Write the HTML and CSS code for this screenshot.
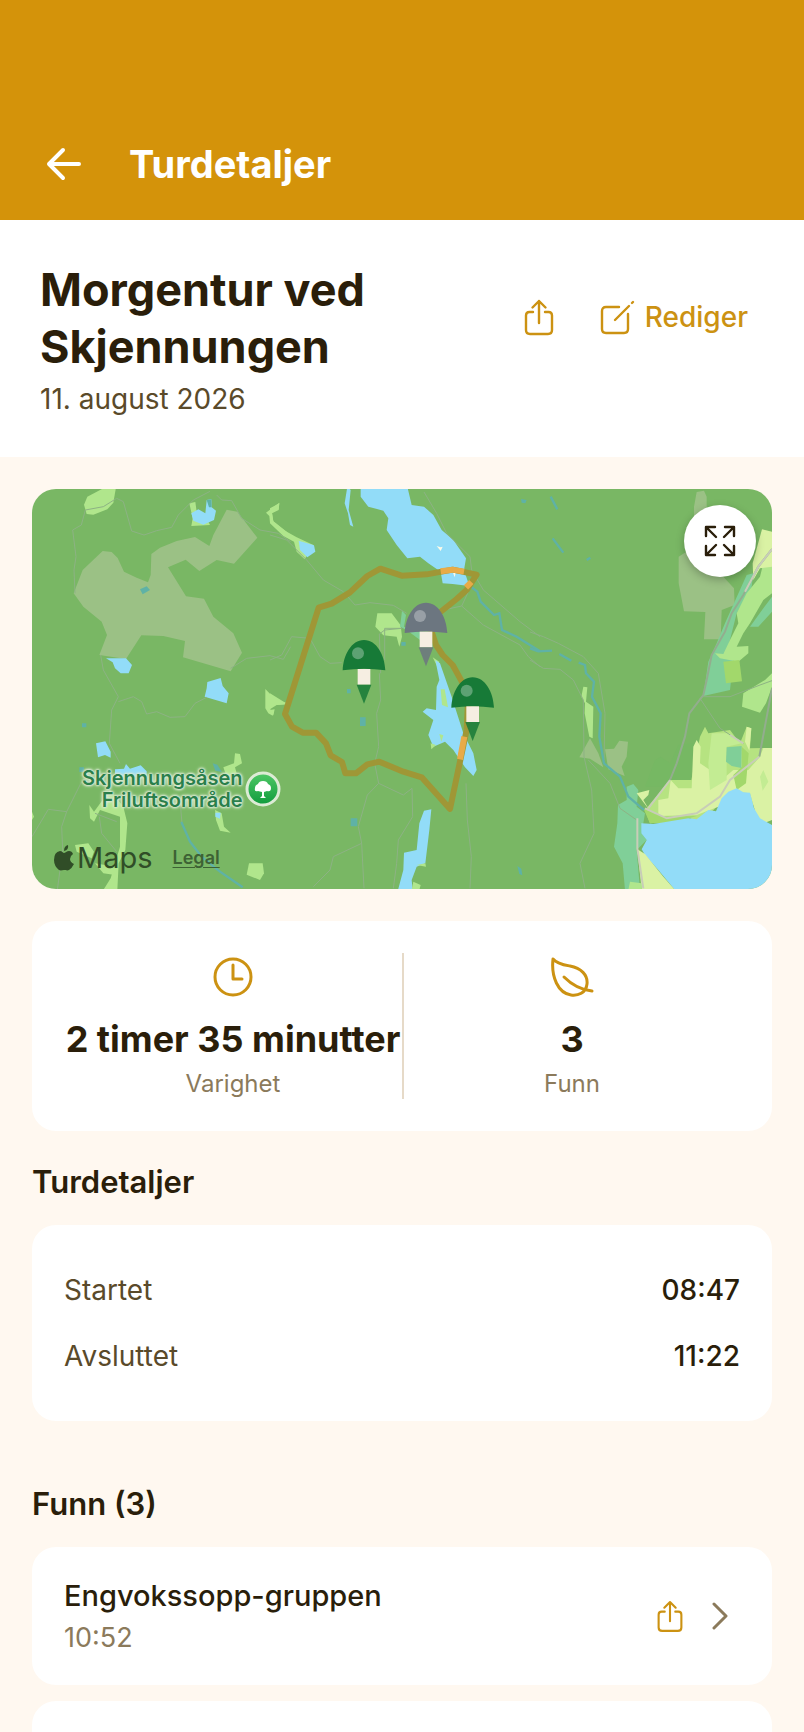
FILE: index.html
```html
<!DOCTYPE html>
<html lang="nb">
<head>
    <meta charset="UTF-8">
    <meta name="viewport" content="width=device-width, initial-scale=1.0">
    <title>Turdetaljer</title>
    <link rel="stylesheet" href="styles.css">
</head>
<body>

    <header class="app-bar">
        <button class="icon-btn back-btn" type="button" aria-label="Tilbake">
            <svg width="36" height="36" viewBox="0 0 36 36" fill="none" stroke="currentColor" stroke-width="4" stroke-linecap="round" stroke-linejoin="round">
                <path d="M33 18H3M17 4L3 18l14 14"/>
            </svg>
        </button>
        <p class="app-title">Turdetaljer</p>
    </header>

    <section class="trip-header">
        <div class="trip-name">
            <h1>Morgentur ved Skjennungen</h1>
            <p class="trip-date">11. august 2026</p>
        </div>
        <div class="trip-actions">
            <button class="icon-btn" type="button" aria-label="Del tur">
                <svg width="32" height="38" viewBox="0 0 32 38" fill="none" stroke="currentColor" stroke-width="2.4" stroke-linecap="round" stroke-linejoin="round">
                    <path d="M10 14H6.500Q3 14 3 17.500V32Q3 36 7 36H25Q29 36 29 32V17.500Q29 14 25.500 14H22"/>
                    <path d="M16 25V3M9.500 9.500L16 3l6.500 6.500"/>
                </svg>
            </button>
            <button class="edit-btn" type="button">
                <svg width="36" height="38" viewBox="0 0 36 38" fill="none" stroke="currentColor" stroke-width="2.4" stroke-linecap="round" stroke-linejoin="round">
                    <path d="M20 9H7Q3 9 3 13V31Q3 35 7 35H25Q29 35 29 31V16"/>
                    <path d="M16 22L30 8M33 5L34 4"/>
                </svg>
                Rediger
            </button>
        </div>
    </section>

    <main>
        <div class="map">
            <svg class="map-art" viewBox="0 0 2220 1200" preserveAspectRatio="xMidYMid slice" role="img" aria-label="Kart over turen">
                <rect width="2220" height="1200" fill="#79b764"/>

                <!-- west -->
                <g transform="translate(-36 -27)">
                    <path fill="#9bc185" d="M248 213L275 216 293 234 312 275 350 293 384 307 392 285 394 222 420 203 470 183 525 171 568 198 580 165 620 89 652 95 712 173 642 251 590 240 538 273 497 239 444 262 498 349 552 356 580 410 640 460 666 518 632 574 489 532 495 483 430 468 364 466 318 537 238 525 261 465 245 425 190 380 161 340 188 270z"/>
                    <g fill="#b0e68c">
                        <path d="M202 50L236 32 260 20 288 22 280 68 262 88 220 104 200 102 192 74z"/>
                        <path d="M508 70L526 66 530 95 560 115 570 135 514 138 518 115z"/>
                        <path d="M778 68L776 88 756 98 760 124 800 155 815 174 790 162 762 136 750 128 748 108 738 98z"/>
                        <path d="M736 627L768 660 812 672 770 675 750 688 762 695 758 707 745 700 736 685z"/>
                        <path d="M645 820L660 822 666 850 645 862 650 880 620 890 610 862 642 850z"/>
                        <path d="M585 990L605 1000 612 1040 632 1058 600 1052 588 1020z"/>
                        <path d="M687 1150L728 1150 732 1180 720 1200 680 1184z"/>
                        <path d="M270 930L310 980 322 1030 316 1110 296 1150 292 1230 250 1230 272 1195 300 1100 300 1010 240 990 222 1025 210 1015 208 975 222 995z"/>
                        <path d="M165 1095L205 1090 222 1115 215 1135 170 1115zM36 995L42 1010 36 1020zM225 1150L285 1160 285 1185 250 1180z"/>
                    </g>
                    <g fill="#92dcf8">
                        <path d="M514 100L535 88 556 100 560 60 574 58 575 82 588 92 582 120 550 134 520 122z"/>
                        <path d="M258 535L318 535 336 555 326 580 302 580 285 565 278 547z"/>
                        <path d="M562 606L602 594 608 618 626 640 620 670 554 650 560 625z"/>
                        <path d="M228 790L256 784 272 815 272 833 255 825 234 832z"/>
                        <path d="M285 868L312 866 318 852 330 866 362 856 380 874 380 890 285 890zM586 998L602 998 600 1016 586 1010z"/>
                    </g>
                    <path fill="#5fb2a6" d="M360 328L380 319 390 330 368 343zM186 730h13v12h-13zM578 850L592 854 606 876 586 872zM560 60l14-2 1 24-8 0zM178 862h14v14h-14z"/>
                    <g fill="none" stroke="#8db284" stroke-width="3">
                        <path d="M165 340L162 270 168 230 158 150 184 135 196 90 250 80 290 55 310 65 335 153 372 165 410 152 455 142 475 105 520 60 570 34"/>
                        <path d="M590 45L605 60 635 62 665 115 720 150 775 160 812 185"/>
                        <path d="M242 525L250 570 295 650 275 690 268 790 300 850M295 665L340 650 365 665 380 702 410 695 450 712 495 710 525 670 560 652M632 565L680 535 750 527 790 538 812 500"/>
                        <path d="M36 1070L85 988 140 995 125 1040 128 1110 112 1230M140 995L185 905M225 1000L290 1025M238 1010L245 1060 290 1115M480 960L486 1030"/>
                    </g>
                    <path fill="none" stroke="#5fb2a6" stroke-width="7" d="M484 1026L510 1085 545 1130 600 1175 668 1222"/>
                </g>

                <!-- lakes around the route -->
                <g transform="translate(714 -27)">
                    <g fill="#b0e68c">
                        <path d="M28 70L26 90 6 100 10 124 45 152 80 172 130 195 104 238 80 215 72 185 40 168 0 130V85z"/>
                        <path d="M322 400L365 400 392 436 396 470 388 500 380 470 340 466 316 440z"/>
                        <path d="M0 640L52 672 20 675 0 670zM0 690L14 688 10 706 0 700zM488 532L508 545 502 560z"/>
                    </g>
                    <path fill="#80cf98" d="M396 392L408 405 402 440 450 455 450 480 410 450 390 440z"/>
                    <g fill="#92dcf8">
                        <path d="M272 20L412 20 425 75 462 80 490 105 515 150 550 180 588 235 582 270 598 318 548 312 518 310 512 275 475 250 450 230 412 235 380 195 350 150 355 115 340 92 295 80 272 50z"/>
                        <path d="M232 20L242 30 236 90 250 140 240 135 234 100 224 70z"/>
                        <path d="M86 182L132 196 136 215 112 232 90 210z"/>
                        <path d="M496 540L510 550 545 650 580 760 610 820 620 870 610 888 585 862 550 810 525 785 490 800 475 765 490 720 458 695 470 685 498 690 500 620 508 600z"/>
                        <path d="M462 992L484 988 478 1050 466 1150 440 1160 425 1200 428 1230 384 1230 400 1170 402 1118 440 1110 448 1030z"/>
                    </g>
                    <path fill="#b0e68c" d="M512 628L524 628 534 682 516 675zM508 762L520 766 514 785zM484 808L482 790 498 795zM440 1155L466 1150 468 1160zM430 1205L452 1215 448 1230 425 1230z"/>
                    <path fill="#fdfbe8" d="M500 198L512 202 518 200 512 213zM549 278h8l-3 14z"/>
                    <path fill="#5fb2a6" d="M270 712h17v26h-17zM242 1015h20v24h-20zM231 627h11v13h-11zM394 486h13v11h-13zM742 1158L754 1166 757 1186 748 1182zM753 57L770 60 766 70 755 68z"/>
                    <path fill="none" stroke="#5fb2a6" stroke-width="7" d="M600 318L622 335 632 365 672 405 688 400 696 450 740 470 810 514"/>
                    <g fill="none" stroke="#8db284" stroke-width="3">
                        <path d="M0 165L50 180 110 240 160 300 220 335 255 375 300 368 370 376 410 400"/>
                        <path d="M462 36L500 100 530 160 600 230 605 270 640 330 750 425 810 470M600 325L575 378 520 390M575 378L640 435 750 495 775 530 810 560"/>
                        <path d="M0 540L35 525 65 470 120 475 150 530 180 550 215 548M328 580L332 660 320 700 326 800 314 850 326 910 292 945 265 1040 275 1090 190 1130 180 1170 130 1220M326 910L400 945 426 925 428 1010 385 1080 380 1150 370 1225M275 1090L282 1225M588 910L592 1020 604 1130 600 1225"/>
                        <path d="M344 540V445H395L344 450 328 462 332 580"/>
                    </g>
                    <path fill="none" stroke="#9f9736" stroke-width="18" stroke-linejoin="round" d="M480 440L498 495 518 525 548 555 595 640 590 750 540 987 455 892 400 875 328 845 292 853 258 880H226L216 846 182 826 168 790 138 758H98L66 740 45 702 146 383 185 371 240 337 292 288 331 266 395 287 470 283 548 269 620 284 590 330 560 357 500 405"/>
                    <path fill="none" stroke="#e8ab48" stroke-width="18" d="M512 274L548 269 582 275M604 306L588 322M583 770L570 838"/>
                </g>

                <!-- east -->
                <g transform="translate(1494 -27)">
                    <path fill="#9bc185" d="M500 36L522 32 530 50 530 200 580 290 612 325 614 375 575 390 572 478 522 478 526 396 462 394 446 310 446 230 492 200 492 80zM180 775L148 832 180 836 220 862 205 820zM225 808L252 806 268 782 294 785 290 830 275 860 284 888 235 868z"/>
                    <path fill="#76b863" d="M345 920L375 840 392 830 420 850 445 795 490 790 480 910 400 920z"/>
                    <path fill="#80cf98" d="M650 285L670 280 665 320 620 400 590 520 610 540 600 630 520 648 535 545 560 490 585 430zM726 350L700 385 660 440 685 440 726 395zM264 975L290 960 290 920 310 912 325 930 320 980 345 1000 335 1060 350 1080 320 1110 330 1230 285 1230 278 1150 252 1100 262 1030z"/>
                    <path fill="#b0e68c" d="M726 200L726 340 700 360 660 430 640 460 620 500 655 498 655 520 625 545 570 535 555 520 580 522 600 480 625 430 620 400 650 340 690 290 700 250zM726 580L705 600 640 640 636 680 690 698 708 670 726 620zM160 620L172 622 168 665 190 680 188 775 178 770 164 700 165 670 154 650z"/>
                    <path fill="#daf2a4" d="M696 148L726 155 726 260 690 265 670 300 668 250zM320 940L358 930 355 945 340 960 358 990z"/>
                    <path fill="#b6e381" d="M345 990L420 900 484 900 510 770 525 740 535 760 600 750 630 790 650 740 664 745 660 805 726 804V1000L640 960 560 980 510 1030 480 1015 360 1030z"/>
                    <path fill="#daf2a4" d="M385 960L415 955 422 900 445 925 485 925 490 800 500 780 512 800 510 850 540 870 545 925 575 900 610 870 655 870 690 830 700 804 726 804V1020L705 1028 680 1010 660 940 610 935 565 980 500 1005 385 1008zM650 740L664 745 658 812 645 785z"/>
                    <path fill="#c3ec93" d="M545 760L600 760 635 790 590 800 590 900 540 930 535 850zM700 870L715 905 698 932 690 890z"/>
                    <path fill="#a2d86b" d="M580 545L628 540 636 604 588 610zM635 800L656 820 648 910 620 930 610 885 636 860zM340 985L400 1010 500 1008 430 1028 360 1030z"/>
                    <path fill="#80cf98" d="M590 802L635 798 634 864 605 858 588 845z"/>
                    <path fill="#92dcf8" d="M334 1030L370 1032 475 1015 500 1018 535 990 558 994 575 955 595 935 620 925 640 937 660 938 672 985 690 1015 726 1035V1230H435L385 1170 345 1125 335 1108 350 1080 334 1060z"/>
                    <path fill="#daf2a4" d="M322 1108L345 1122 400 1190 435 1230H335z"/>
                    <path fill="#b0e68c" d="M300 1205L335 1210V1230H295z"/>
                    <g fill="none" stroke="#8db284" stroke-width="3">
                        <path d="M0 456L40 470 85 490 160 530 205 580 225 700 222 840M0 540L40 565 90 568 130 600 160 660 162 830 185 930 192 1060 150 1150 165 1225M175 840L240 910 270 985 320 1020"/>
                        <path d="M510 655L570 745 640 790M515 650L600 650 690 615 726 602"/>
                    </g>
                    <path fill="none" stroke="#5fb2a6" stroke-width="7" d="M0 505L25 514 66 512M88 522L124 542M146 548L165 555 168 580 192 605 186 650 212 700 208 770 222 850 270 890 295 950 342 990M62 50L82 88M68 175L100 218M170 240L181 233"/>
                    <g fill="none" stroke="#93ad8e" stroke-width="6">
                        <path d="M726 207L685 260 640 345 605 400 585 455 545 525 530 600 520 645 478 700 465 770 440 850 420 900"/>
                        <path d="M726 625L688 830"/>
                    </g>
                    <path fill="none" stroke="#c8cdb8" stroke-width="6" d="M726 207L685 260 645 335M420 900L355 985M688 830L600 900 570 950 500 1000 410 1015 345 985M322 1015L322 1105 340 1225M640 790L600 765"/>
                </g>

                <!-- finds -->
                <defs>
                    <g id="mushroom">
                        <path d="M-64 91C-62 45-38 0 0 0S62 45 64 91Q0 82-64 91z"/>
                        <circle cx="-18" cy="40" r="18" fill="#fff" opacity="0.3"/>
                        <path fill="#f6eee2" d="M-19 87H19V134H-19z"/>
                        <path d="M-22 134H22L0 191z" opacity="0.85"/>
                    </g>
                </defs>
                <use href="#mushroom" x="996" y="453" fill="#177a37"/>
                <use href="#mushroom" x="1182" y="341" fill="#6c7680"/>
                <use href="#mushroom" x="1322" y="565" fill="#177a37"/>
            </svg>

            <div class="map-place">
                <p>Skjennungsåsen<br>Friluftsområde</p>
                <svg width="36" height="36" viewBox="0 0 36 36">
                    <defs>
                        <linearGradient id="park" x1="0" y1="0" x2="0" y2="1">
                            <stop offset="0" stop-color="#4fc866"/>
                            <stop offset="1" stop-color="#109b3d"/>
                        </linearGradient>
                    </defs>
                    <circle cx="18" cy="18" r="16" fill="url(#park)" stroke="#dcebd5" stroke-width="3"/>
                    <path fill="#fff" d="M17 21L13 20Q9 21 10 17Q10 14 13 13Q14 10 18 10Q22 10 23 13Q26 14 26 17Q26 21 22 20L19 21V25L21 27H15L17 25z"/>
                </svg>
            </div>

            <div class="map-credit">
                <span class="map-brand">
                    <svg width="20" height="26" viewBox="0 0 20 26" fill="currentColor">
                        <path d="M10 8C11 8 13 6 15 6Q18 6 19 9Q16 11 16 14Q16 17 20 19Q18 23 15 25C13 26 12 25 10 25S7 26 5 25Q0 21 0 15Q0 7 6 6C8 6 9 8 10 8z"/>
                        <path d="M10 6Q10 1 14 0Q15 5 10 6z"/>
                    </svg>
                    Maps
                </span>
                <a class="map-legal" href="#">Legal</a>
            </div>

            <button class="map-expand" type="button" aria-label="Vis kart i fullskjerm">
                <svg width="32" height="32" viewBox="0 0 32 32" fill="none" stroke="currentColor" stroke-width="2.4" stroke-linecap="round" stroke-linejoin="round">
                    <path d="M2 11V2H11M2 2L12 12M21 2H30V11M30 2L20 12M2 21V30H11M2 30L12 20M30 21V30H21M30 30L20 20"/>
                </svg>
            </button>
        </div>

        <section class="card stats">
            <div class="stat">
                <svg width="40" height="40" viewBox="0 0 40 40" fill="none" stroke="currentColor" stroke-width="3" stroke-linecap="round" stroke-linejoin="round">
                    <circle cx="20" cy="20" r="18"/>
                    <path d="M20 8V22H29"/>
                </svg>
                <p class="stat-value">2 timer 35 minutter</p>
                <p class="stat-label">Varighet</p>
            </div>
            <div class="stat">
                <svg width="44" height="40" viewBox="0 0 44 40" fill="none" stroke="currentColor" stroke-width="3" stroke-linecap="round" stroke-linejoin="round">
                    <path d="M3 2C7 7 14 8 20 9C31 11 38 18 37 27C36 36 28 39 21 38C8 36 1 20 3 2z"/>
                    <path d="M14 20C22 28 32 33 42 34"/>
                </svg>
                <p class="stat-value">3</p>
                <p class="stat-label">Funn</p>
            </div>
        </section>

        <h2>Turdetaljer</h2>
        <dl class="card details">
            <div class="detail-row">
                <dt>Startet</dt>
                <dd>08:47</dd>
            </div>
            <div class="detail-row">
                <dt>Avsluttet</dt>
                <dd>11:22</dd>
            </div>
        </dl>

        <h2 class="finds-heading">Funn (3)</h2>
        <ul class="finds">
            <li class="card find">
                <div class="find-info">
                    <h3>Engvokssopp-gruppen</h3>
                    <p>10:52</p>
                </div>
                <button class="icon-btn" type="button" aria-label="Del funn">
                    <svg width="28" height="34" viewBox="0 0 32 38" fill="none" stroke="currentColor" stroke-width="2.4" stroke-linecap="round" stroke-linejoin="round">
                        <path d="M10 14H6.500Q3 14 3 17.500V32Q3 36 7 36H25Q29 36 29 32V17.500Q29 14 25.500 14H22"/>
                        <path d="M16 25V3M9.500 9.500L16 3l6.500 6.500"/>
                    </svg>
                </button>
                <svg class="chevron" width="16" height="28" viewBox="0 0 16 28" fill="none" stroke="currentColor" stroke-width="3" stroke-linecap="round" stroke-linejoin="round">
                    <path d="M2 2L14 14 2 26"/>
                </svg>
            </li>
            <li class="card find"></li>
        </ul>
    </main>

</body>
</html>
```

FILE: styles.css
```css
* {
    box-sizing: border-box;
}
body {
    height: 100vh;
    margin: 0;
    overflow: hidden;
    background: #fff8f0;
    color: #2a1e0a;
    font-family: Inter, "Liberation Sans", sans-serif;
}
h1, h2, h3, p, dl, dd, ul {
    margin: 0;
    padding: 0;
}
svg {
    display: block;
    flex-shrink: 0;
}
button {
    padding: 0;
    border: none;
    background: none;
    color: #cc9212;
    font-family: inherit;
    cursor: pointer;
}

/* top */
.app-bar {
    display: flex;
    align-items: center;
    gap: 47px;
    height: 220px;
    padding: 108px 32px 0 46px;
    background: #d4930a;
    color: #fff;
}
.back-btn {
    color: #fff;
}
.app-title {
    font-size: 38px;
    font-weight: 700;
}
.trip-header {
    display: flex;
    justify-content: space-between;
    padding: 41px 56px 40px 40px;
    background: #fff;
}
.trip-name {
    flex: 1;
    max-width: 400px;
}
h1 {
    font-size: 45px;
    font-weight: 700;
    line-height: 57px;
}
.trip-date {
    margin-top: 6px;
    color: #5a4a2a;
    font-size: 28px;
    line-height: 36px;
}
.trip-actions {
    display: flex;
    align-items: center;
    gap: 44px;
    height: 112px;
}
.edit-btn {
    display: flex;
    align-items: center;
    gap: 10px;
    font-size: 28px;
    font-weight: 500;
}

main {
    padding: 32px;
}
.card {
    background: #fff;
    border-radius: 24px;
}

/* map */
.map {
    position: relative;
    height: 400px;
    border-radius: 24px;
    overflow: hidden;
}
.map-art {
    width: 100%;
    height: 100%;
}
.map-place {
    position: absolute;
    left: 50px;
    top: 278px;
    display: flex;
    align-items: center;
    gap: 3px;
    color: #2a7f4b;
    font-size: 20px;
    font-weight: 600;
    line-height: 22px;
    text-align: right;
    text-shadow: 0 0 2px #dcebd5, 0 0 2px #dcebd5, 0 0 3px #dcebd5, 0 0 3px #dcebd5, 0 0 4px #dcebd5;
}
.map-credit {
    position: absolute;
    left: 22px;
    bottom: 14px;
    display: flex;
    align-items: center;
    gap: 20px;
    color: #304d27;
}
.map-brand {
    display: flex;
    align-items: center;
    gap: 3px;
    font-size: 29px;
}
.map-legal {
    color: #3d6234;
    font-size: 18px;
    font-weight: 600;
    text-underline-offset: 3px;
}
.map-expand {
    position: absolute;
    top: 16px;
    right: 16px;
    display: grid;
    place-items: center;
    width: 72px;
    height: 72px;
    border-radius: 50%;
    background: #fff;
    color: #2a1e0a;
    box-shadow: 0 3px 8px rgba(0, 0, 0, 0.25);
}

/* stats */
.stats {
    display: grid;
    grid-template-columns: 1fr 1fr;
    margin-top: 32px;
    padding: 32px;
}
.stat {
    display: flex;
    flex-direction: column;
    align-items: center;
    height: 146px;
    padding-top: 4px;
    color: #cc9212;
    white-space: nowrap;
}
.stat + .stat {
    border-left: 2px solid #e6dac8;
}
.stat-value {
    margin-top: 20px;
    color: #2a1e0a;
    font-size: 36px;
    font-weight: 700;
    line-height: 44px;
}
.stat-label {
    margin-top: 8px;
    color: #8b7a5b;
    font-size: 24px;
    line-height: 30px;
}

/* details */
h2 {
    margin: 32px 0 24px;
    font-size: 31px;
    font-weight: 600;
    line-height: 38px;
}
.details {
    padding: 32px;
    font-size: 28px;
    line-height: 34px;
}
.detail-row {
    display: flex;
    justify-content: space-between;
    padding: 16px 0;
}
.detail-row dt {
    color: #5a4a2a;
}
.detail-row dd {
    font-weight: 500;
}

/* finds */
.finds-heading {
    margin-top: 64px;
}
.finds {
    display: grid;
    gap: 16px;
    list-style: none;
}
.find {
    display: flex;
    align-items: center;
    gap: 28px;
    min-height: 138px;
    padding: 30px 44px 30px 32px;
}
.find-info {
    flex: 1;
}
.find h3 {
    font-size: 29px;
    font-weight: 500;
    line-height: 38px;
}
.find p {
    margin-top: 6px;
    color: #8b7a5b;
    font-size: 27px;
    line-height: 34px;
}
.chevron {
    color: #8b7a5b;
}
```
